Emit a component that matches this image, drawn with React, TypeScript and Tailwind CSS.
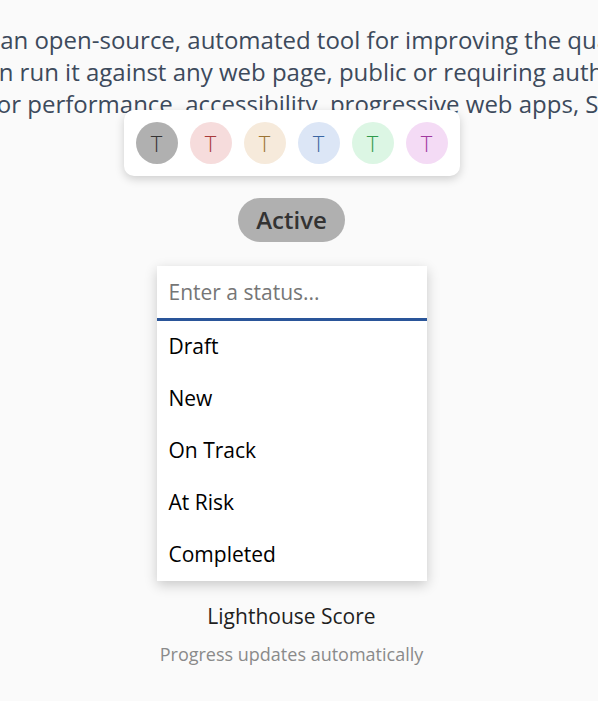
import { useState } from 'react';

const avatars = [
  { bg: 'bg-[#b0b0b0]', fg: 'text-[#333333]' },
  { bg: 'bg-[#f6dcdc]', fg: 'text-[#a83a3a]' },
  { bg: 'bg-[#f6eadb]', fg: 'text-[#9c7433]' },
  { bg: 'bg-[#dce6f6]', fg: 'text-[#3a66a3]' },
  { bg: 'bg-[#dcf6e4]', fg: 'text-[#2f9a4b]' },
  { bg: 'bg-[#f4dbf5]', fg: 'text-[#a03a9f]' },
];

const statuses = ['Draft', 'New', 'On Track', 'At Risk', 'Completed'];

const intro = [
  'Lighthouse is an open-source, automated tool for improving the quality of web',
  'pages. You can run it against any web page, public or requiring authentication.',
  'It has audits for performance, accessibility, progressive web apps, SEO and more.',
];

const App = () => {
  const [query, setQuery] = useState('');

  return (
    <div
      className="min-h-[701px] w-full bg-[#fafafa] overflow-hidden"
      style={{ fontFamily: '"Open Sans", "Liberation Sans", sans-serif' }}
    >
      <div className="w-[583px] flex flex-col items-center pt-6">
        {/* intro copy, wider than the viewport */}
        <div className="w-[890px] shrink-0 flex flex-col items-start text-[24px] leading-8 text-[#3d4a5c] whitespace-nowrap">
          {intro.map(line => (
            <div key={line}>{line}</div>
          ))}
        </div>

        {/* avatar strip */}
        <div className="-mt-[10px] relative flex gap-3 p-3 bg-white rounded-[10px] shadow-[0_3px_10px_rgba(0,0,0,0.18)]">
          {avatars.map((a, i) => (
            <div
              key={i}
              className={`w-[42px] h-[42px] rounded-full flex items-center justify-center text-[22px] font-light ${a.bg} ${a.fg}`}
            >
              T
            </div>
          ))}
        </div>

        {/* status pill */}
        <div className="mt-[22px] h-[44px] px-[18px] rounded-full bg-[#b0b0b0] text-[#333333] text-[24px] font-semibold flex items-center">
          Active
        </div>

        {/* status dropdown */}
        <div className="mt-6 w-[270px] bg-white shadow-[0_4px_12px_rgba(0,0,0,0.2)]">
          <input
            value={query}
            onChange={e => setQuery(e.target.value)}
            placeholder="Enter a status..."
            className="w-full h-[55px] px-3 text-[21px] text-black placeholder:text-[#767676] outline-none border-b-[3px] border-[#2a5599] bg-white"
          />
          {statuses.map(s => (
            <div key={s} className="h-[52px] px-3 flex items-center text-[21px] text-black">
              {s}
            </div>
          ))}
        </div>

        <div className="mt-[21px] text-[21px] leading-7 text-[#1f1f1f]">Lighthouse Score</div>
        <div className="mt-[12px] text-[18px] leading-6 text-[#8a8a8a]">Progress updates automatically</div>
      </div>
    </div>
  );
};

export default App;
